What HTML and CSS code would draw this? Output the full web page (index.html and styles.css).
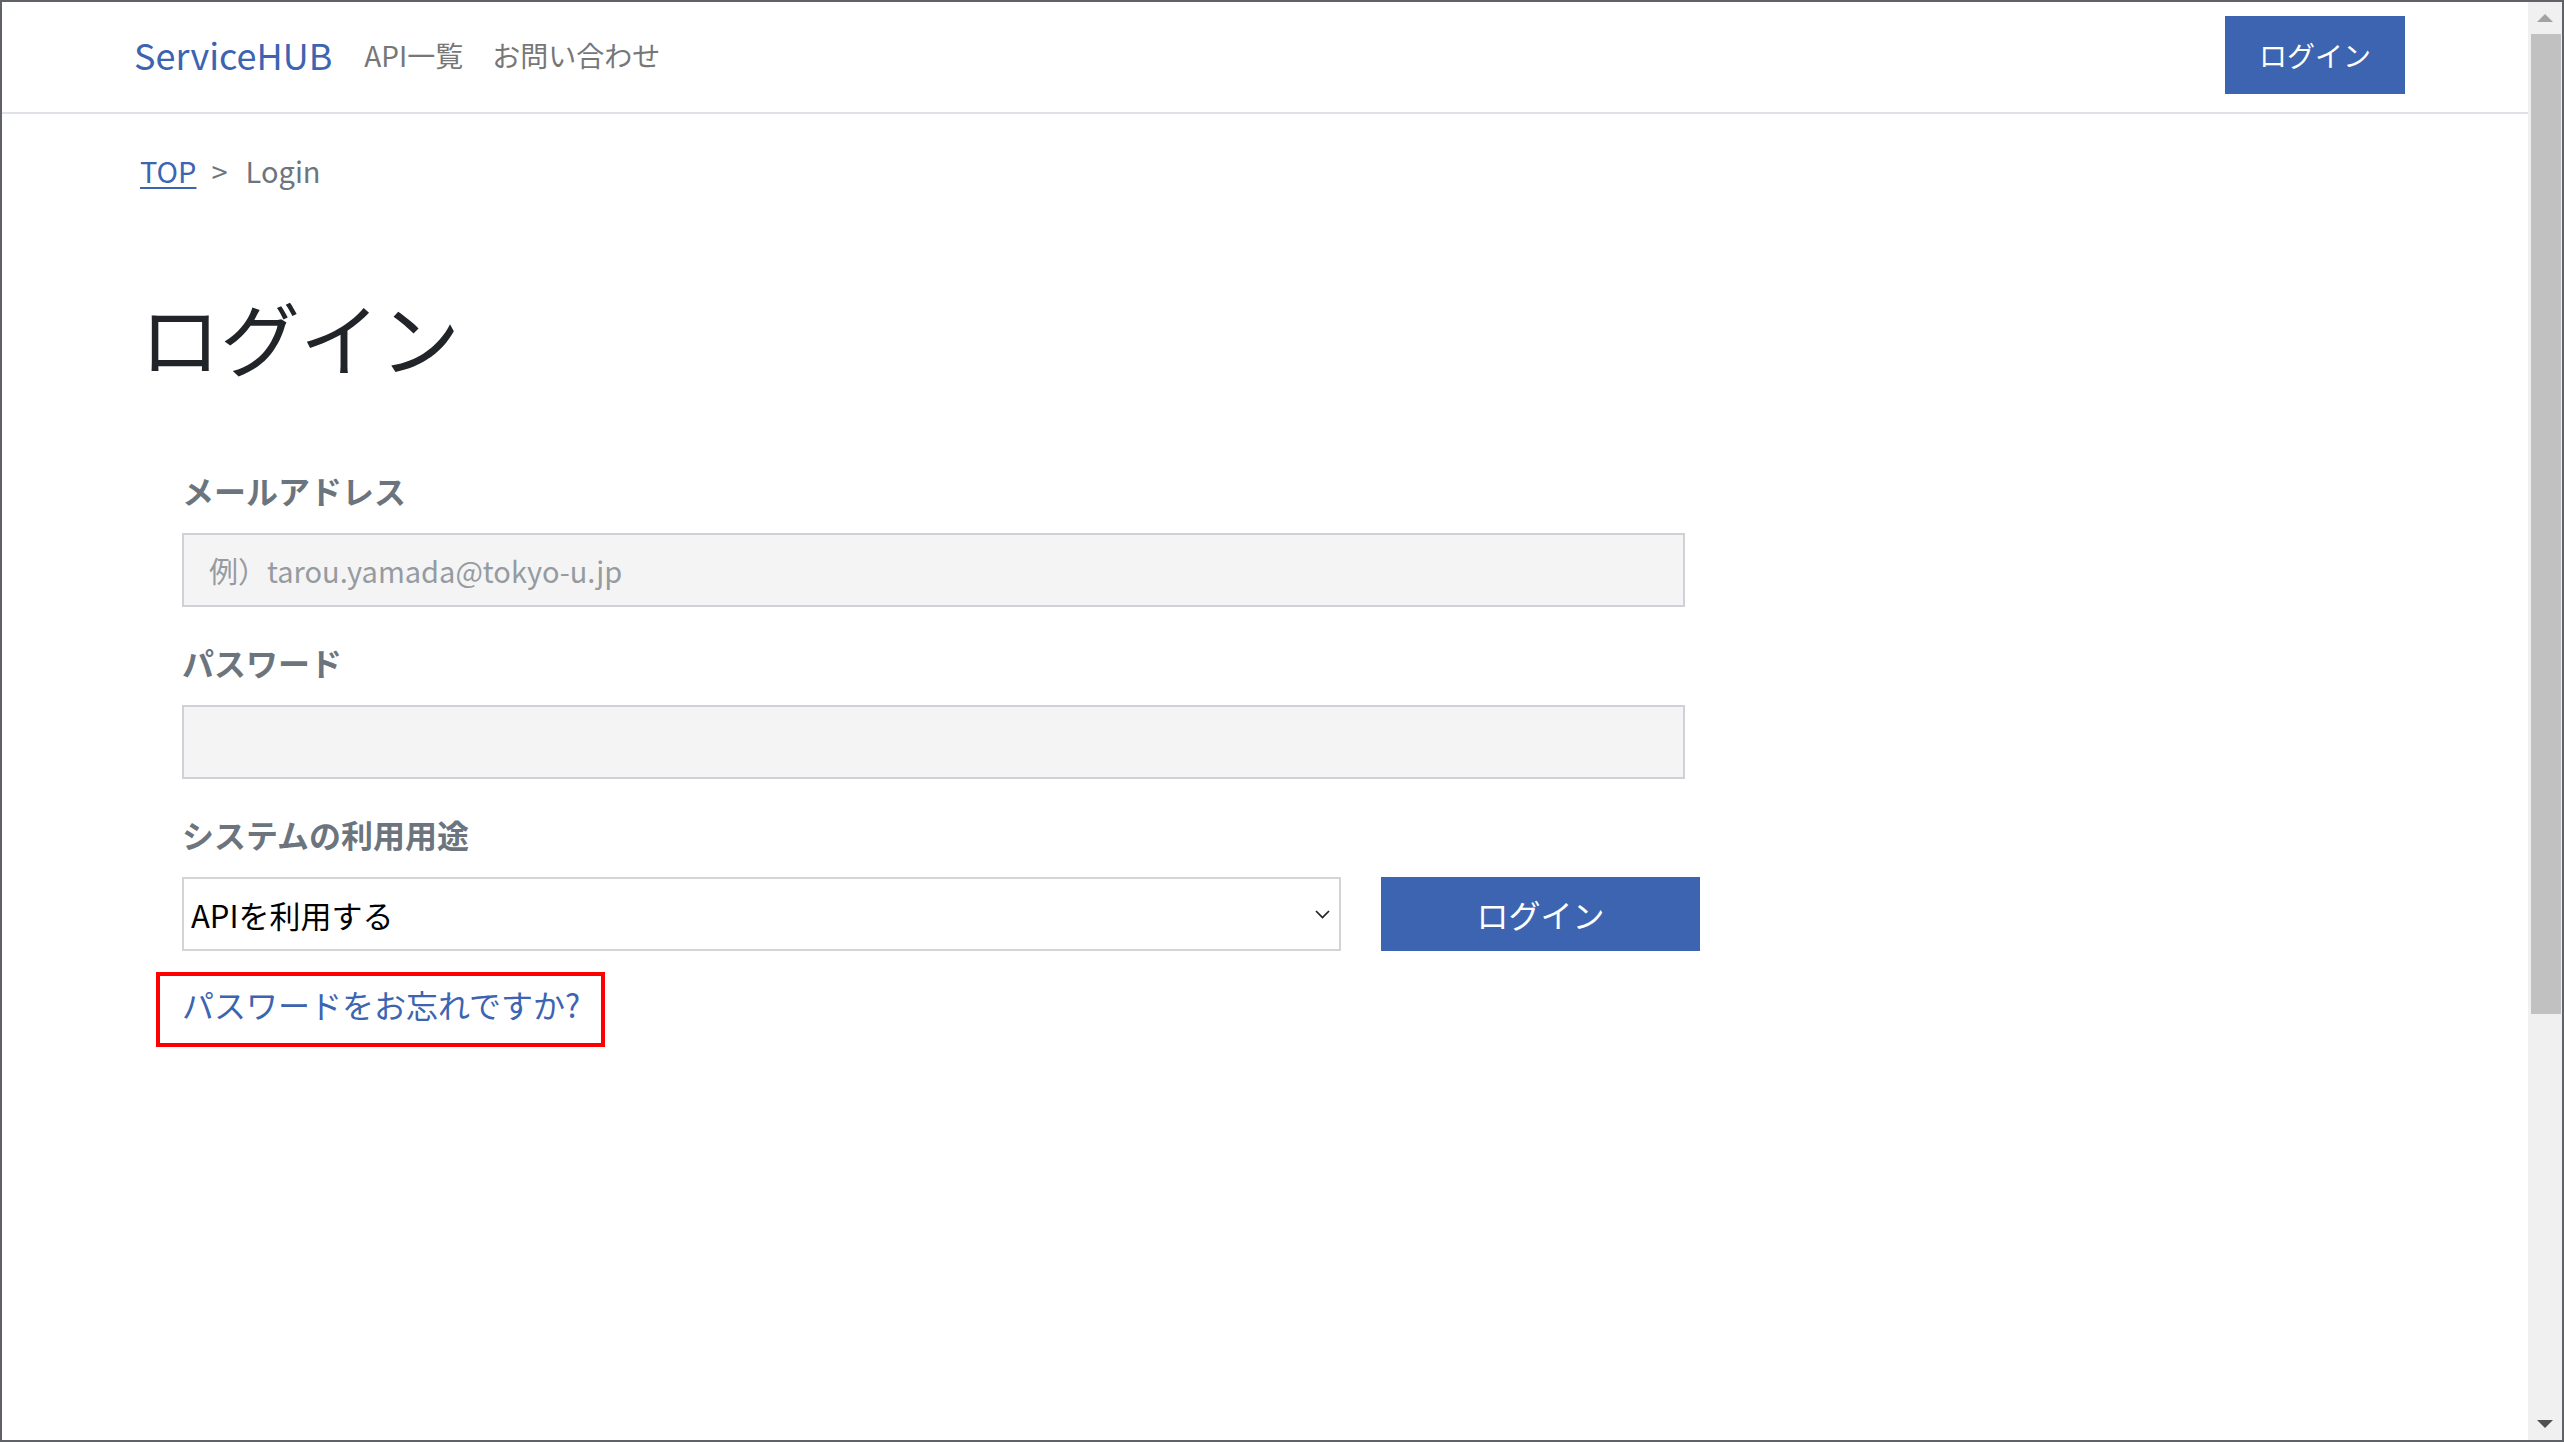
FILE: index.html
```html
<!DOCTYPE html>
<html lang="ja">
<head>
    <meta charset="UTF-8">
    <meta name="viewport" content="width=device-width, initial-scale=1.0">
    <title>ログイン | ServiceHUB</title>
    <link rel="stylesheet" href="styles.css">
</head>
<body>
    <div class="window">
        <div class="page">
            <header class="navbar">
                <a class="brand" href="#">ServiceHUB</a>
                <nav class="nav">
                    <a href="#">API一覧</a>
                    <a href="#">お問い合わせ</a>
                </nav>
                <a class="btn btn-header" href="#">ログイン</a>
            </header>

            <main class="content">
                <div class="breadcrumb">
                    <a href="#">TOP</a>
                    <span class="divider">&gt;</span>
                    <span class="current">Login</span>
                </div>

                <h1>ログイン</h1>

                <form class="login-form" onsubmit="return false">
                    <div class="form-group">
                        <label for="email">メールアドレス</label>
                        <input type="email" id="email" name="email" placeholder="例）tarou.yamada@tokyo-u.jp">
                    </div>

                    <div class="form-group">
                        <label for="password">パスワード</label>
                        <input type="password" id="password" name="password">
                    </div>

                    <div class="form-group">
                        <label for="usage">システムの利用用途</label>
                        <div class="form-row">
                            <div class="select-wrap">
                                <select id="usage" name="usage">
                                    <option>APIを利用する</option>
                                </select>
                                <!-- 矢印 -->
                                <svg class="chevron" width="15" height="9" viewBox="0 0 15 9">
                                    <polyline points="1,1 7.5,7.5 14,1" fill="none" stroke="#222" stroke-width="1.7"/>
                                </svg>
                            </div>
                            <button type="submit" class="btn btn-login">ログイン</button>
                        </div>
                    </div>

                    <a class="forgot" href="#">パスワードをお忘れですか?</a>
                </form>
            </main>
        </div>

        <div class="scrollbar">
            <div class="scroll-arrow">
                <svg width="16" height="8" viewBox="0 0 16 8"><polygon points="0,8 8,0 16,8" fill="#a3a3a3"/></svg>
            </div>
            <div class="scroll-thumb"></div>
            <div class="scroll-track"></div>
            <div class="scroll-arrow">
                <svg width="16" height="8" viewBox="0 0 16 8"><polygon points="0,0 16,0 8,8" fill="#505050"/></svg>
            </div>
        </div>
    </div>
</body>
</html>
```

FILE: styles.css
```css
* {
    margin: 0;
    padding: 0;
    box-sizing: border-box;
    font-family: "Noto Sans CJK JP", "Noto Sans", sans-serif;
}

html, body {
    height: 100%;
    overflow: hidden;
    background: #fff;
}

.window {
    display: flex;
    height: 100vh;
    border: 2px solid #5f6368;
}

.page {
    flex: 1;
    min-width: 0;
}

/* ヘッダー */
.navbar {
    display: flex;
    align-items: center;
    height: 112px;
    padding: 0 123px 5px 132px;
    border-bottom: 2px solid #dee2e6;
}

.brand {
    font-size: 36px;
    line-height: 1.2;
    color: #3c64b1;
    text-decoration: none;
    margin-right: 32px;
}

.nav {
    display: flex;
    gap: 29px;
}

.nav a {
    font-size: 28px;
    line-height: 1.5;
    color: #777;
    text-decoration: none;
}

.btn {
    display: flex;
    justify-content: center;
    align-items: center;
    background: #3c64b1;
    color: white;
    border: none;
    text-decoration: none;
    cursor: pointer;
}

.btn-header {
    margin-left: auto;
    width: 180px;
    height: 78px;
    font-size: 28px;
}

/* メイン */
.content {
    padding-left: 138px;
}

.breadcrumb {
    display: flex;
    gap: 15px;
    margin-top: 35px;
    font-size: 29px;
    line-height: 42px;
    color: #6c757d;
}

.breadcrumb a {
    color: #3c64b1;
    text-decoration: underline;
    text-decoration-thickness: 2px;
    text-underline-offset: 4px;
}

.breadcrumb .divider {
    margin-right: 3px;
}

h1 {
    font-size: 80px;
    font-weight: 400;
    line-height: 96px;
    margin-top: 96px;
    color: #212529;
}

.login-form {
    margin-left: 42px;
    margin-top: 83px;
}

.form-group + .form-group {
    margin-top: 31px;
}

label {
    display: block;
    font-size: 32px;
    font-weight: 700;
    line-height: 48px;
    color: #6c757d;
    margin-bottom: 19px;
}

input {
    display: block;
    width: 1503px;
    height: 74px;
    padding: 0 25px;
    border: 2px solid #cfd1d6;
    background: #f4f4f4;
    font-size: 29px;
    color: #212529;
}

input::placeholder {
    color: #959ba1;
}

input:focus,
select:focus {
    outline: none;
}

.form-row {
    display: flex;
    gap: 40px;
}

.select-wrap {
    position: relative;
    width: 1159px;
}

select {
    appearance: none;
    width: 100%;
    height: 74px;
    padding: 0 7px;
    border: 2px solid #d4d4d4;
    border-radius: 0;
    background: white;
    font-size: 31px;
    color: #000;
}

.chevron {
    position: absolute;
    right: 11px;
    top: 33px;
}

.btn-login {
    width: 319px;
    height: 74px;
    font-size: 32px;
}

.forgot {
    position: relative;
    display: inline-block;
    margin-top: 29px;
    font-size: 32px;
    line-height: 48px;
    color: #3c64b1;
    text-decoration: none;
}

/* 注記の赤枠 */
.forgot::after {
    content: "";
    position: absolute;
    top: -8px;
    bottom: -19px;
    left: -26px;
    right: -25px;
    border: 4px solid #ff0000;
}

/* スクロールバー */
.scrollbar {
    display: flex;
    flex-direction: column;
    width: 34px;
    background: #f0f0f0;
}

.scroll-arrow {
    height: 32px;
    display: flex;
    justify-content: center;
    align-items: center;
}

.scroll-thumb {
    height: 980px;
    margin: 0 1px 0 3px;
    background: #c1c1c1;
}

.scroll-track {
    flex: 1;
}
```
